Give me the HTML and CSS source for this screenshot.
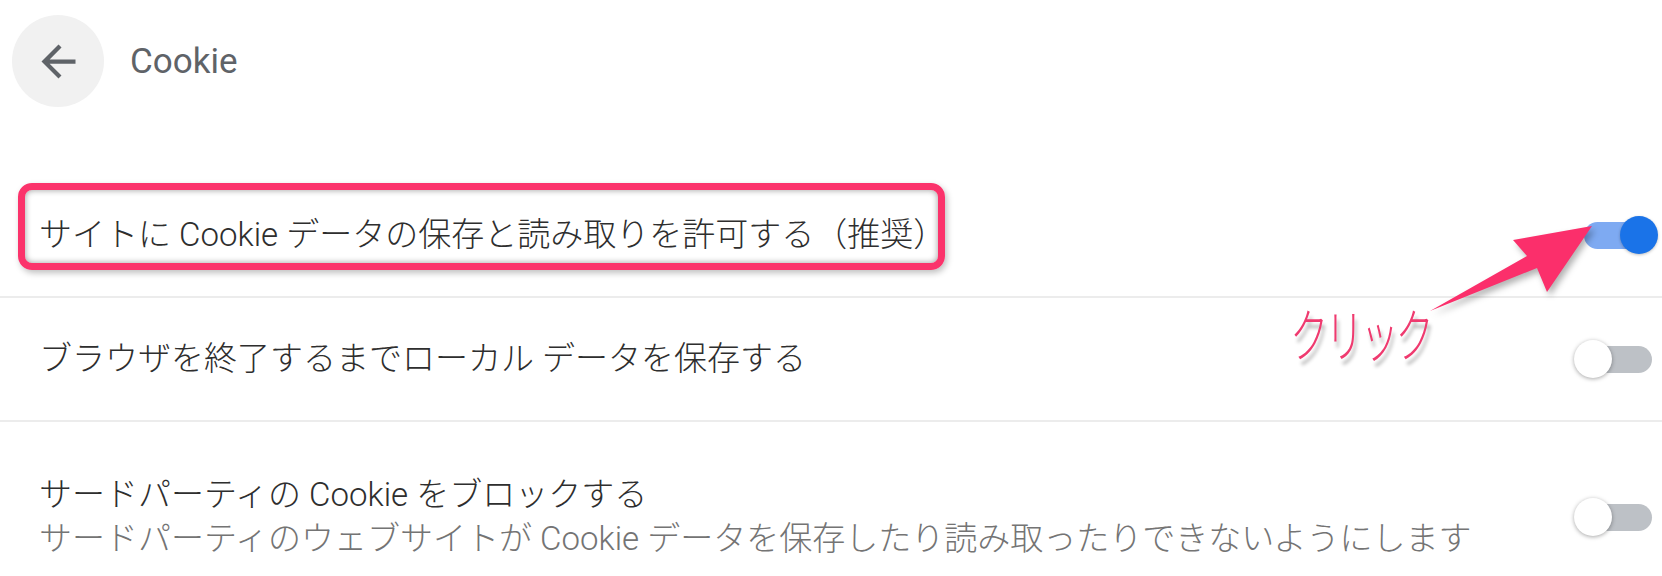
FILE: index.html
```html
<!DOCTYPE html>
<html lang="ja">
<head>
  <meta charset="UTF-8" />
  <meta name="viewport" content="width=device-width, initial-scale=1.0"/>
  <title>Cookie</title>
  <link rel="stylesheet" href="styles.css">
</head>
<body>
  <div class="page">
    <div class="header">
      <div class="back">
        <svg viewBox="0 0 24 24" width="51" height="51">
          <path d="M20 11H7.83l5.59-5.59L12 4l-8 8 8 8 1.41-1.41L7.83 13H20v-2z" fill="#5f6368"/>
        </svg>
      </div>
      <h1>Cookie</h1>
    </div>

    <div class="list">
      <div class="row">
        <div class="label">サイトに Cookie データの保存と読み取りを許可する（推奨）</div>
        <div class="toggle on"><span class="knob"></span></div>
      </div>
      <div class="row">
        <div class="label">ブラウザを終了するまでローカル データを保存する</div>
        <div class="toggle"><span class="knob"></span></div>
      </div>
      <div class="row two-line">
        <div class="label">
          サードパーティの Cookie をブロックする
          <div class="sub">サードパーティのウェブサイトが Cookie データを保存したり読み取ったりできないようにします</div>
        </div>
        <div class="toggle"><span class="knob"></span></div>
      </div>
    </div>

    <!-- annotations drawn over the screenshot -->
    <div class="mark"></div>
    <svg class="arrow" viewBox="1420 220 180 100" width="180" height="100">
      <polygon points="1430,311 1527,256 1513,240 1592,226 1547,292 1537,268" fill="#fb2f6b"/>
    </svg>
    <div class="note">クリック</div>
  </div>
</body>
</html>
```

FILE: styles.css
```css
body {
  margin: 0;
  padding: 0;
  background: #fff;
  font-family: Roboto, "Noto Sans CJK JP", sans-serif;
}

.page {
  position: relative;
  height: 576px;
  overflow: hidden;
}

.header {
  display: flex;
  align-items: center;
  height: 122px;
  padding-left: 12px;
}

.back {
  width: 92px;
  height: 92px;
  border-radius: 50%;
  background: #f1f1f1;
  display: flex;
  align-items: center;
  justify-content: center;
}

.header h1 {
  margin: 0 0 0 26px;
  font-size: 35px;
  font-weight: 400;
  color: #5f6368;
}

.list {
  margin-top: 52px;
}

.row {
  display: flex;
  align-items: center;
  justify-content: space-between;
  min-height: 122px;
  padding: 0 10px 0 39px;
  border-bottom: 2px solid #ececec;
}

.row:last-child {
  border-bottom: none;
}

.row.two-line {
  padding-top: 34px;
  padding-bottom: 34px;
}

.label {
  font-size: 33px;
  font-weight: 300;
  line-height: 44px;
  color: #2e2e2e;
}

.sub {
  color: #747474;
}

.toggle {
  position: relative;
  width: 74px;
  height: 38px;
  flex-shrink: 0;
}

.toggle::before {
  content: "";
  position: absolute;
  left: 6px;
  right: 0;
  top: 6px;
  height: 27px;
  border-radius: 14px;
  background: #bdc1c6;
}

.toggle .knob {
  position: absolute;
  left: -4px;
  top: 0;
  width: 38px;
  height: 38px;
  border-radius: 50%;
  background: #fff;
  box-shadow: 0 1px 4px rgba(0, 0, 0, 0.35);
}

.toggle.on::before {
  background: #7eaaf2;
}

.toggle.on .knob {
  left: 42px;
  background: #1a73e8;
  box-shadow: 0 1px 3px rgba(0, 0, 0, 0.25);
}

.mark {
  position: absolute;
  left: 18px;
  top: 183px;
  width: 913px;
  height: 73px;
  border: 7px solid #fb336b;
  border-radius: 14px;
  box-shadow: inset 0 0 6px rgba(0, 0, 0, 0.4), 2px 3px 6px rgba(0, 0, 0, 0.25);
}

.arrow {
  position: absolute;
  left: 1420px;
  top: 220px;
  filter: drop-shadow(3px 4px 3px rgba(0, 0, 0, 0.3));
}

.note {
  position: absolute;
  left: 1290px;
  top: 296px;
  font-family: "Noto Sans CJK JP", sans-serif;
  font-size: 48px;
  font-weight: 300;
  line-height: 60px;
  letter-spacing: -4px;
  color: #ef3a6f;
  transform: scale(0.8, 1.2);
  transform-origin: left top;
  text-shadow: 3px 5px 4px rgba(0, 0, 0, 0.3);
}
```
